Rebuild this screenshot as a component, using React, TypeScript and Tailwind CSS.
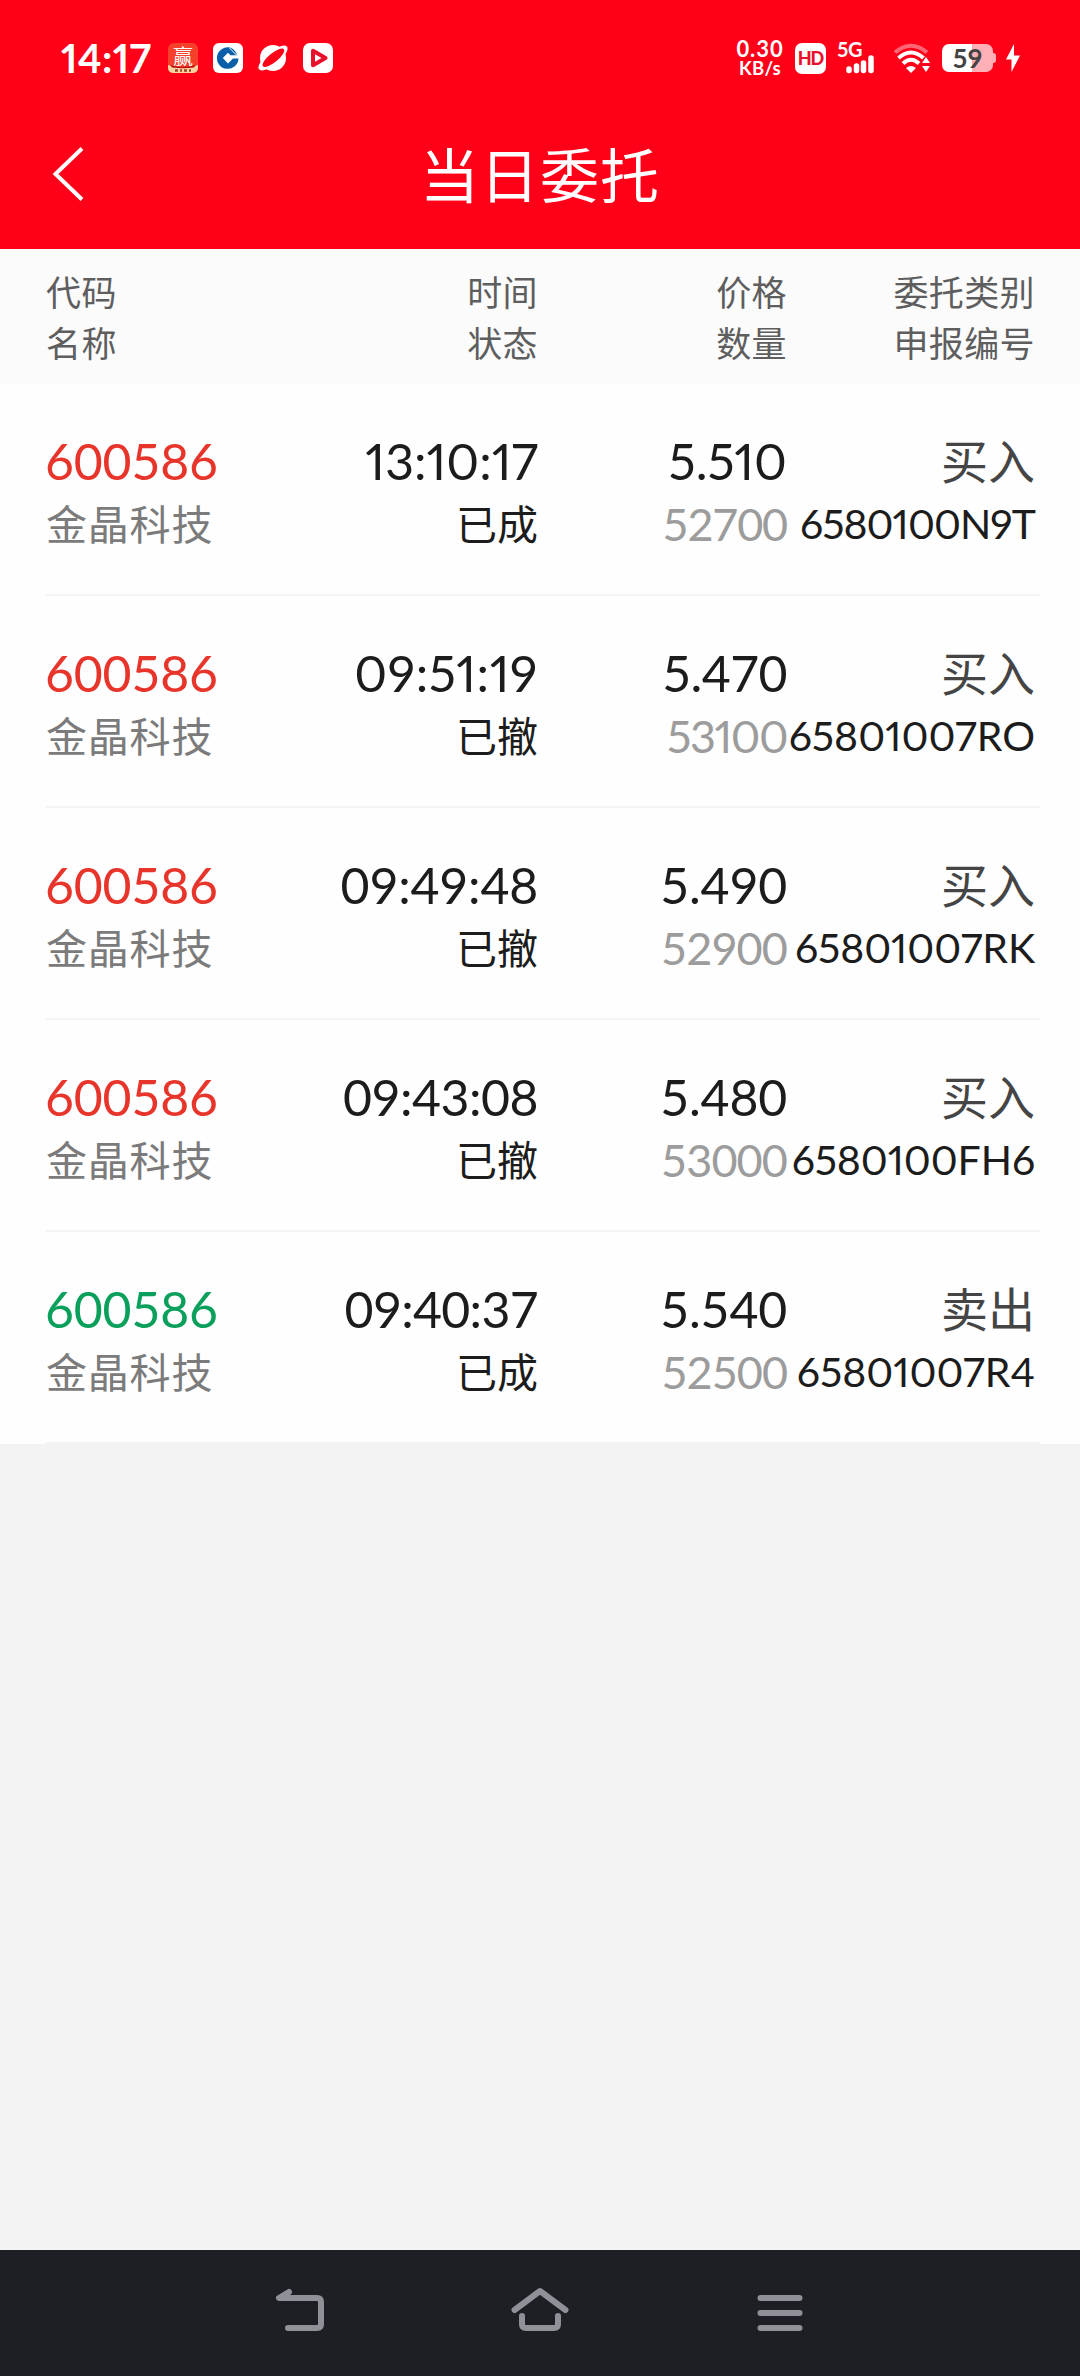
import React from 'react';

interface Order {
  code: string;
  name: string;
  time: string;
  timeClass: string;
  status: string;
  price: string;
  priceClass: string;
  amount: string;
  amountClass: string;
  type: string;
  number: string;
  numberClass?: string;
  sell?: boolean;
}

const orders: Order[] = [
  {
    code: '600586', name: '金晶科技', status: '已成', type: '买入',
    time: '13:10:17', timeClass: 'proportional-nums',
    price: '5.510', priceClass: 'proportional-nums',
    amount: '52700', amountClass: 'tracking-[-1.2px]',
    number: '6580100N9T', numberClass: 'tracking-[-0.95px]',
  },
  {
    code: '600586', name: '金晶科技', status: '已撤', type: '买入',
    time: '09:51:19', timeClass: 'proportional-nums tracking-[0.6px]',
    price: '5.470', priceClass: 'tracking-[-0.6px]',
    amount: '53100', amountClass: 'proportional-nums tracking-[-1.5px]',
    number: '65801007RO',
  },
  {
    code: '600586', name: '金晶科技', status: '已撤', type: '买入',
    time: '09:49:48', timeClass: 'tracking-[-0.2px]',
    price: '5.490', priceClass: 'tracking-[-0.2px]',
    amount: '52900', amountClass: 'tracking-[-0.9px]',
    number: '65801007RK', numberClass: 'tracking-[-0.1px]',
  },
  {
    code: '600586', name: '金晶科技', status: '已撤', type: '买入',
    time: '09:43:08', timeClass: 'tracking-[-0.5px]',
    price: '5.480', priceClass: 'tracking-[-0.2px]',
    amount: '53000', amountClass: 'tracking-[-0.9px]',
    number: '6580100FH6', numberClass: 'tracking-[-0.1px]',
  },
  {
    code: '600586', name: '金晶科技', status: '已成', type: '卖出',
    time: '09:40:37', timeClass: 'tracking-[-0.7px]',
    price: '5.540', priceClass: 'tracking-[-0.2px]',
    amount: '52500', amountClass: 'tracking-[-1px]',
    number: '65801007R4', sell: true,
  },
];

const headers = [
  ['代码', '名称'],
  ['时间', '状态'],
  ['价格', '数量'],
  ['委托类别', '申报编号'],
];

const StatusBar: React.FC = () => (
  <div className="flex h-[116px] items-center pl-[61px] pr-[60px] text-white">
    <span className="w-[107px] text-[40px] font-bold leading-none tracking-[0.3px] proportional-nums">14:17</span>
    <div className="flex gap-[15px]">
      {/* Win broker app */}
      <svg className="overflow-visible" width="30" height="30" viewBox="0 0 30 30">
        <rect width="30" height="30" rx="6" fill="#f5402c" />
        <text x="15" y="20.500" fontSize="20" textAnchor="middle" fill="#fff" fontFamily="Noto Sans CJK SC">赢</text>
        <path d="M0 22 L4 23 Q15 26 26 23 L30 22 V25 Q30 30 24 30 H6 Q0 30 0 25 Z" fill="#fbd3a0" />
        <path d="M2 22 Q15 26 28 22 L26 24.500 Q15 26 4 24.500 Z" fill="#b80f14" />
        <path d="M7 27.500h3m2 0h2m2 0h3m2 0h2" stroke="#a04628" strokeWidth="2.500" />
      </svg>
      {/* Bank */}
      <svg width="30" height="30" viewBox="0 0 30 30">
        <rect width="30" height="30" rx="6" fill="#fff" />
        <path d="M17 4.500 A10.800 10.800 0 1 0 25.500 15.500 H20 L15 20.500 L9.800 15 L15 9.800 L17.500 12.300 H24 A11 11 0 0 0 17 4.500 Z" fill="#0a5fa8" />
        <path d="M16.500 5 L23.500 12" stroke="#fff" strokeWidth="1" />
      </svg>
      {/* Planet */}
      <svg width="30" height="30" viewBox="0 0 30 30">
        <circle cx="15" cy="15" r="13" fill="#fff" />
        <ellipse cx="15" cy="15" rx="18" ry="6.500" transform="rotate(-39 15 15)" fill="#fff" />
        <ellipse cx="15.500" cy="15" rx="13.500" ry="4.500" transform="rotate(-39 15 15)" fill="#ff0019" />
      </svg>
      {/* Video player */}
      <svg width="30" height="30" viewBox="0 0 30 30">
        <rect width="30" height="30" rx="7" fill="#fff" />
        <path d="M10 7.800 V22.200 L22.500 15 Z" fill="#fff" stroke="#e8102a" strokeWidth="4" strokeLinejoin="round" />
      </svg>
    </div>

    <div className="ml-auto flex items-center">
      <div className="flex w-[48px] flex-col items-center font-bold">
        <span className="text-[22px] leading-[19px] tracking-[0.9px]">0.30</span>
        <span className="text-[18.5px] leading-[20px] tracking-[0.3px]">KB/s</span>
      </div>
      <div className="ml-[11px] flex h-[31px] w-[31px] items-center justify-center rounded-[7px] bg-white text-[18px] font-black leading-none tracking-[-1px] text-[#e8102a]">
        HD
      </div>
      <svg className="ml-[11px]" width="46" height="44" viewBox="0 -6 46 44">
        <text x="0" y="15" fontSize="20" fontWeight="700" fill="#fff" fontFamily="Lato" letterSpacing="-0.500">5G</text>
        <path d="M12.500 27v1.500M20 24v4.500M27 21v7.500M34.500 16v12.500" transform="translate(-0.500 0)" stroke="#fff" strokeWidth="5.500" strokeLinecap="round" />
      </svg>
      <svg className="ml-[10px]" width="40" height="31" viewBox="0 0 40 31">
        <g fill="none" stroke="#fff" strokeWidth="4">
          <path d="M2 9.500 Q18 -4 34 9.500" opacity="0.400" />
          <path d="M5.500 15 Q18 4 30.500 15" />
          <path d="M10 20.500 Q18 13 26 20.500" />
        </g>
        <path d="M13 25 Q18 21 23 25 L18 30 Z" fill="#fff" />
        <path d="M33 14 l4 6 h-8 z M33 29 l4 -6 h-8 z" fill="#fff" />
      </svg>
      <div className="ml-[9px] flex items-center">
        <div className="flex h-[28px] w-[51px] items-center justify-center rounded-[7px] bg-[linear-gradient(90deg,#fff_59%,#ffb0b6_59%)] text-[26px] font-bold leading-none text-[#444]">
          59
        </div>
        <div className="h-[10px] w-[3px] rounded-r-sm bg-[#ffb0b6]" />
      </div>
      <svg className="ml-[10px]" width="14" height="28" viewBox="0 0 14 28">
        <path d="M8 0 L0 15.500 H5.500 V28 L14 11.500 H8 Z" fill="#fff" />
      </svg>
    </div>
  </div>
);

const TitleBar: React.FC = () => (
  <div className="grid h-[133px] grid-cols-[200px_1fr_200px] items-start text-white">
    <button className="ml-[52px] mt-[31px]">
      <svg width="34" height="54" viewBox="0 0 34 54" fill="none" stroke="#fff" strokeWidth="4">
        <path d="M30 1.500 L3.500 27 L30 52.500" />
      </svg>
    </button>
    <h1 className="mt-[20px] text-center text-[59px] leading-[80px] tracking-[1px]">当日委托</h1>
  </div>
);

const OrderRow: React.FC<{ order: Order }> = ({ order }) => (
  <div className="ml-[46px] mr-[40px] grid h-[212px] grid-cols-[250px_242px_249px_248px] border-b-2 border-[#f4f4f4] pt-[47px] text-right text-[#1c1c1c]">
    <div className="text-left">
      <div className={`-ml-px text-[50px] leading-[60px] tracking-[-0.2px] ${order.sell ? 'text-[#0aa05c]' : 'text-[#e8352b]'}`}>{order.code}</div>
      <div className="text-[41px] leading-[68px] tracking-[0.8px] text-[#7b7b7b]">{order.name}</div>
    </div>
    <div>
      <div className={`text-[50px] leading-[60px] ${order.timeClass}`}>{order.time}</div>
      <div className="text-[41px] leading-[68px]">{order.status}</div>
    </div>
    <div>
      <div className={`text-[50px] leading-[60px] ${order.priceClass}`}>{order.price}</div>
      <div className={`text-[45px] leading-[66px] text-[#9c9c9c] ${order.amountClass}`}>{order.amount}</div>
    </div>
    <div>
      <div className="text-[47px] leading-[60px] text-[#454545]">{order.type}</div>
      <div className={`whitespace-nowrap text-[41px] leading-[66px] proportional-nums ${order.numberClass ?? ''}`}>{order.number}</div>
    </div>
  </div>
);

const NavBar: React.FC = () => (
  <nav className="flex h-[126px] items-start justify-between bg-[#1c1f24] px-[270px] pt-[32px]">
    <svg width="60" height="60" viewBox="270 2282 60 60" fill="none" stroke="#8e9198" strokeWidth="6" strokeLinecap="round" strokeLinejoin="round">
      <path d="M289 2292 L279 2298 H317 Q321 2298 321 2302 V2324 Q321 2328 317 2328 H288" />
    </svg>
    <svg width="60" height="60" viewBox="510 2282 60 60" fill="none" stroke="#8e9198" strokeWidth="6" strokeLinecap="round" strokeLinejoin="round">
      <path d="M514.500 2310 L540 2291 L565.500 2310" />
      <path d="M522 2316 V2324 Q522 2328 526 2328 H554 Q558 2328 558 2324 V2316" />
    </svg>
    <svg width="60" height="60" viewBox="750 2282 60 60" fill="none" stroke="#8e9198" strokeWidth="6" strokeLinecap="round">
      <path d="M760.500 2298 H799.500 M760.500 2313 H799.500 M760.500 2328 H799.500" />
    </svg>
  </nav>
);

const App: React.FC = () => (
  <div className="flex h-[2376px] w-[1080px] flex-col bg-[#f3f3f3] font-['Lato','Noto_Sans_CJK_SC',sans-serif]">
    <header className="bg-[#ff0019]">
      <StatusBar />
      <TitleBar />
    </header>

    <div className="grid h-[135px] grid-cols-[250px_242px_249px_248px] bg-[#fbfbfc] pl-[46px] pt-[18px] text-right text-[35px] leading-[51px] tracking-[0.4px] text-[#5e5e5e]">
      {headers.map((lines, i) => (
        <div key={lines[0]} className={i === 0 ? 'text-left' : ''}>
          <div>{lines[0]}</div>
          <div>{lines[1]}</div>
        </div>
      ))}
    </div>

    <main className="flex-1">
      <div className="bg-[#fefefe]">
        {orders.map(order => (
          <OrderRow key={order.number} order={order} />
        ))}
      </div>
    </main>

    <NavBar />
  </div>
);

export default App;
